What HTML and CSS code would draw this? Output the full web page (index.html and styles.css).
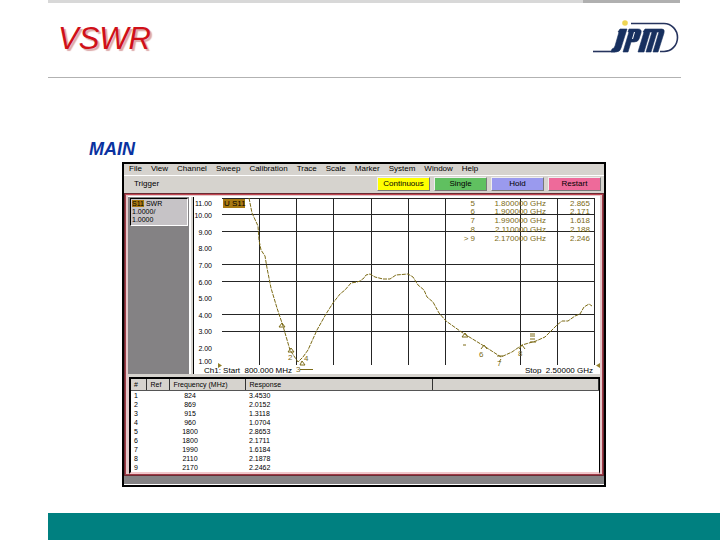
FILE: index.html
```
<!DOCTYPE html>
<html lang="en">
<head>
<meta charset="utf-8">
<title>VSWR</title>
<link rel="stylesheet" href="styles.css">
</head>
<body>
<div class="rail"></div>
<header class="header">
  <h1 class="title">VSWR</h1>
  <svg class="logo" viewBox="0 0 86 40" role="img" aria-label="jpm">
    <path d="M38 5.500H71A13.500 14 0 0 1 71 33.500H67" fill="none" stroke="#26345e" stroke-width="1.600"/>
    <path d="M0 33.500H22" stroke="#26345e" stroke-width="1.600"/>
    <circle cx="32" cy="5" r="2.800" fill="#eed553"/>
    <path class="glyph" d="M27 11h7l-6 19q-1 4-5 4h-5l1-3q2 0 3-3l4-14h-1zM36 11h9q4 0 3 4l-2 6q-1 3-5 3h-3l-3 10h-5l6-20h-1zM52 11h17q3 0 2 4l-6 19h-5l6-20h-2l-6 20h-5l6-20h-2l-6 20h-6l6-20h-1z"/>
    <path d="M41 14l-2 7h1l2-7z" fill="#fff"/>
  </svg>
</header>
<main class="content">
  <h2 class="subtitle">MAIN</h2>
  <section class="window">
    <nav class="menu">
      <a href="#">File</a><a href="#">View</a><a href="#">Channel</a><a href="#">Sweep</a><a href="#">Calibration</a><a href="#">Trace</a><a href="#">Scale</a><a href="#">Marker</a><a href="#">System</a><a href="#">Window</a><a href="#">Help</a>
    </nav>
    <div class="toolbar">
      <span class="toolname">Trigger</span>
      <button class="btn yellow">Continuous</button>
      <button class="btn green">Single</button>
      <button class="btn blue">Hold</button>
      <button class="btn pink">Restart</button>
    </div>
    <div class="frame">
      <div class="upper">
        <aside class="side">
          <div class="status"><b class="tag">S11</b> SWR<br>1.0000/<br>1.0000</div>
        </aside>
        <svg class="chart" viewBox="194 197 406 177" role="img" aria-label="SWR trace from 800 MHz to 2.5 GHz">
          <path class="grid" d="M222 198.500H595M222 214.500H595M222 231.500H595M222 264.500H595M222 281.500H595M222 314.500H595M222 331.500H595M259.500 198V365M296.500 198V365M333.500 198V365M371.500 198V365M408.500 198V365M445.500 198V365M520.500 198V365M557.500 198V365M594.500 198V365"/>
          <g class="scale">
            <text x="212" y="206">11.00</text><text x="212" y="218">10.00</text><text x="212" y="235">9.00</text><text x="212" y="251">8.00</text><text x="212" y="268">7.00</text><text x="212" y="285">6.00</text><text x="212" y="301">5.00</text><text x="212" y="318">4.00</text><text x="212" y="334">3.00</text><text x="212" y="351">2.00</text><text x="212" y="364">1.00</text>
          </g>
          <rect x="223" y="199" width="22" height="9" fill="#a87912"/>
          <text x="224" y="206">U S11</text>
          <path class="trace" d="M249 198L252 213 258 226 259 240 261 250 265 256 267 268 271 288 277 308 283 326 290 350 298 362 303 357 308 350 317 330 326 314 333 303 340 294 345 290 351 283 357 282 360 281 364 278 366 275 370 274 375 277 383 279 390 279 396 275 408 274 413 277 418 285 424 290 427 297 433 302 439 313 446 321 460 331 466 335 484 346 501 357 512 352 522 345 536 341 545 337 551 331 557 325 562 321 568 321 575 316 580 314 584 307 589 304 592 306"/>
          <path class="mark" d="M279 327h6l-3-4zM288 352h6l-3-4zM300 365h5l-3-4zM462 337h6l-3-4zM481 349l3-4 3 4M497 356h6M499 362l2-3M519 349l3-4 3 4M530 342h6M530 339h5M530 336h5M530 334h5M463 345h3M300 369.500h13"/>
          <g class="marktext"><text x="288" y="360">2</text><text x="304" y="361">4</text><text x="296" y="372">3</text><text x="479" y="357">6</text><text x="497" y="366">7</text><text x="518" y="356">8</text></g>
          <path d="M218 363l4 2.500-4 2.500zM600 363l-4 2.500 4 2.500z" fill="#93802b"/>
          <text x="204" y="373">Ch1: Start&#160; 800.000 MHz</text>
          <text class="end" x="593" y="373">Stop&#160; 2.50000 GHz</text>
          <g class="readout">
            <text x="475" y="206">5</text><text x="546" y="206">1.800000 GHz</text><text x="590" y="206">2.865</text>
            <text x="475" y="214">6</text><text x="546" y="214">1.900000 GHz</text><text x="590" y="214">2.171</text>
            <text x="475" y="223">7</text><text x="546" y="223">1.990000 GHz</text><text x="590" y="223">1.618</text>
            <text x="475" y="232">8</text><text x="546" y="232">2.110000 GHz</text><text x="590" y="232">2.188</text>
            <text x="475" y="241">&gt; 9</text><text x="546" y="241">2.170000 GHz</text><text x="590" y="241">2.246</text>
          </g>
        </svg>
      </div>
      <div class="lower">
        <table class="data">
          <colgroup><col class="c1"><col class="c2"><col class="c3"><col class="c4"><col></colgroup>
          <thead><tr><th>#</th><th>Ref</th><th>Frequency (MHz)</th><th>Response</th><th></th></tr></thead>
          <tbody>
            <tr><td>1</td><td></td><td>824</td><td>3.4530</td><td></td></tr>
            <tr><td>2</td><td></td><td>869</td><td>2.0152</td><td></td></tr>
            <tr><td>3</td><td></td><td>915</td><td>1.3118</td><td></td></tr>
            <tr><td>4</td><td></td><td>960</td><td>1.0704</td><td></td></tr>
            <tr><td>5</td><td></td><td>1800</td><td>2.8653</td><td></td></tr>
            <tr><td>6</td><td></td><td>1800</td><td>2.1711</td><td></td></tr>
            <tr><td>7</td><td></td><td>1990</td><td>1.6184</td><td></td></tr>
            <tr><td>8</td><td></td><td>2110</td><td>2.1878</td><td></td></tr>
            <tr><td>9</td><td></td><td>2170</td><td>2.2462</td><td></td></tr>
          </tbody>
        </table>
      </div>
    </div>
    <div class="base"></div>
  </section>
</main>
<footer class="footer"></footer>
</body>
</html>
```
FILE: styles.css
```
* { box-sizing: border-box; }
body {
  margin: 0;
  padding-left: 48px;
  min-height: 100vh;
  display: flex;
  flex-direction: column;
  background: #fff;
  color: #000;
  font-family: "Liberation Sans", Arial, sans-serif;
}
.rail { height: 3px; margin-right: 40px; background: linear-gradient(to left, #b0b0b0 97px, #d8d8d8 97px); }
.header {
  height: 75px;
  margin-right: 39px;
  padding: 15px 2px 0 10px;
  display: flex;
  justify-content: space-between;
  border-bottom: 1px solid #b2b2b2;
}
.title {
  margin: 0;
  font-size: 31px;
  line-height: 42px;
  font-weight: 400;
  font-style: italic;
  color: #d01018;
  text-shadow: 2px 2px 1px #dca9a9;
}
.logo { width: 86px; height: 40px; }
.glyph { fill: #17305f; stroke: #17305f; stroke-width: 0.6; }
.content { flex: 1; padding: 61px 114px 26px 74px; }
.subtitle {
  margin: 0 0 3px -33px;
  font-size: 18px;
  line-height: 20px;
  font-style: italic;
  color: #0a32a0;
}
.window { border: 2px solid #000; background: #d6d3ce; font-size: 8px; line-height: 10px; }
.menu {
  height: 12px;
  padding: 0 5px;
  display: flex;
  gap: 9px;
  border-bottom: 1px solid #fff;
}
.menu a { color: #000; text-decoration: none; }
.toolbar { height: 17px; padding: 1px 3px 2px 10px; display: flex; align-items: center; gap: 4px; }
.toolname { flex: 1; }
.btn {
  width: 53px;
  height: 14px;
  padding: 0;
  border: 1px solid;
  border-color: #eee #777 #777 #eee;
  font: 8px/10px "Liberation Sans", Arial, sans-serif;
  color: #000;
}
.yellow { background: #ff0; }
.green { background: #60c060; }
.blue { background: #9a9aee; }
.pink { background: #ee6a9a; }
.frame {
  padding: 1px 2px 0;
  border: 2px solid #a13c48;
  border-top-color: #c04450;
  outline: 1px solid #6a2c34;
  outline-offset: -1px;
  background: #e4c8ca;
}
.upper { display: flex; padding-bottom: 3px; border-top: 1px solid #fff; background: #d6d3ce; }
.side { flex: 0 0 63px; margin-right: 2px; padding: 1px 1px 0 2px; background: #848284; border-right: 2px solid #fff; }
.status {
  height: 28px;
  padding: 1px;
  border: 1px solid;
  border-color: #000 #fff #fff #000;
  background: #c6c3c6;
  font-size: 7px;
  line-height: 8px;
}
.tag { font-weight: 400; background: #a87912; }
.chart { flex: 1; min-width: 0; background: #fff; border-left: 1px solid #000; }
.chart text { font-size: 8px; }
.grid { fill: none; stroke: #252525; stroke-width: 1; }
.trace { fill: none; stroke: #7c6b16; stroke-width: 1; stroke-dasharray: 4 1; }
.mark { fill: none; stroke: #7c6b16; }
.marktext text { fill: #7c6b16; }
.scale text, .readout text, .chart .end { text-anchor: end; }
.chart .scale text { font-size: 7px; }
.readout text { fill: #7c6b16; }
.lower { margin: 0 0 0 1px; border: 2px solid #000; border-right-width: 1px; border-bottom: 2px solid #f0c8cc; background: #fff; }
.data { width: 100%; table-layout: fixed; border-collapse: collapse; font-size: 7px; line-height: 9px; }
.c1 { width: 15px; }
.c2 { width: 23px; }
.c3 { width: 76px; }
.c4 { width: 187px; }
.data th, .data td { height: 9px; padding: 0 0 0 4px; font-weight: 400; text-align: left; }
.data th { height: 11px; background: #d6d3ce; border-right: 1px solid #333; border-bottom: 1px solid #555; }
.data td:first-child, .data th:first-child { padding-left: 3px; }
.data td:nth-child(3) { padding: 0 34px 0 0; text-align: center; }
.base { height: 9px; background: #848284; border-bottom: 1px solid #fff; }
.footer { height: 27px; background: #008080; }
```
